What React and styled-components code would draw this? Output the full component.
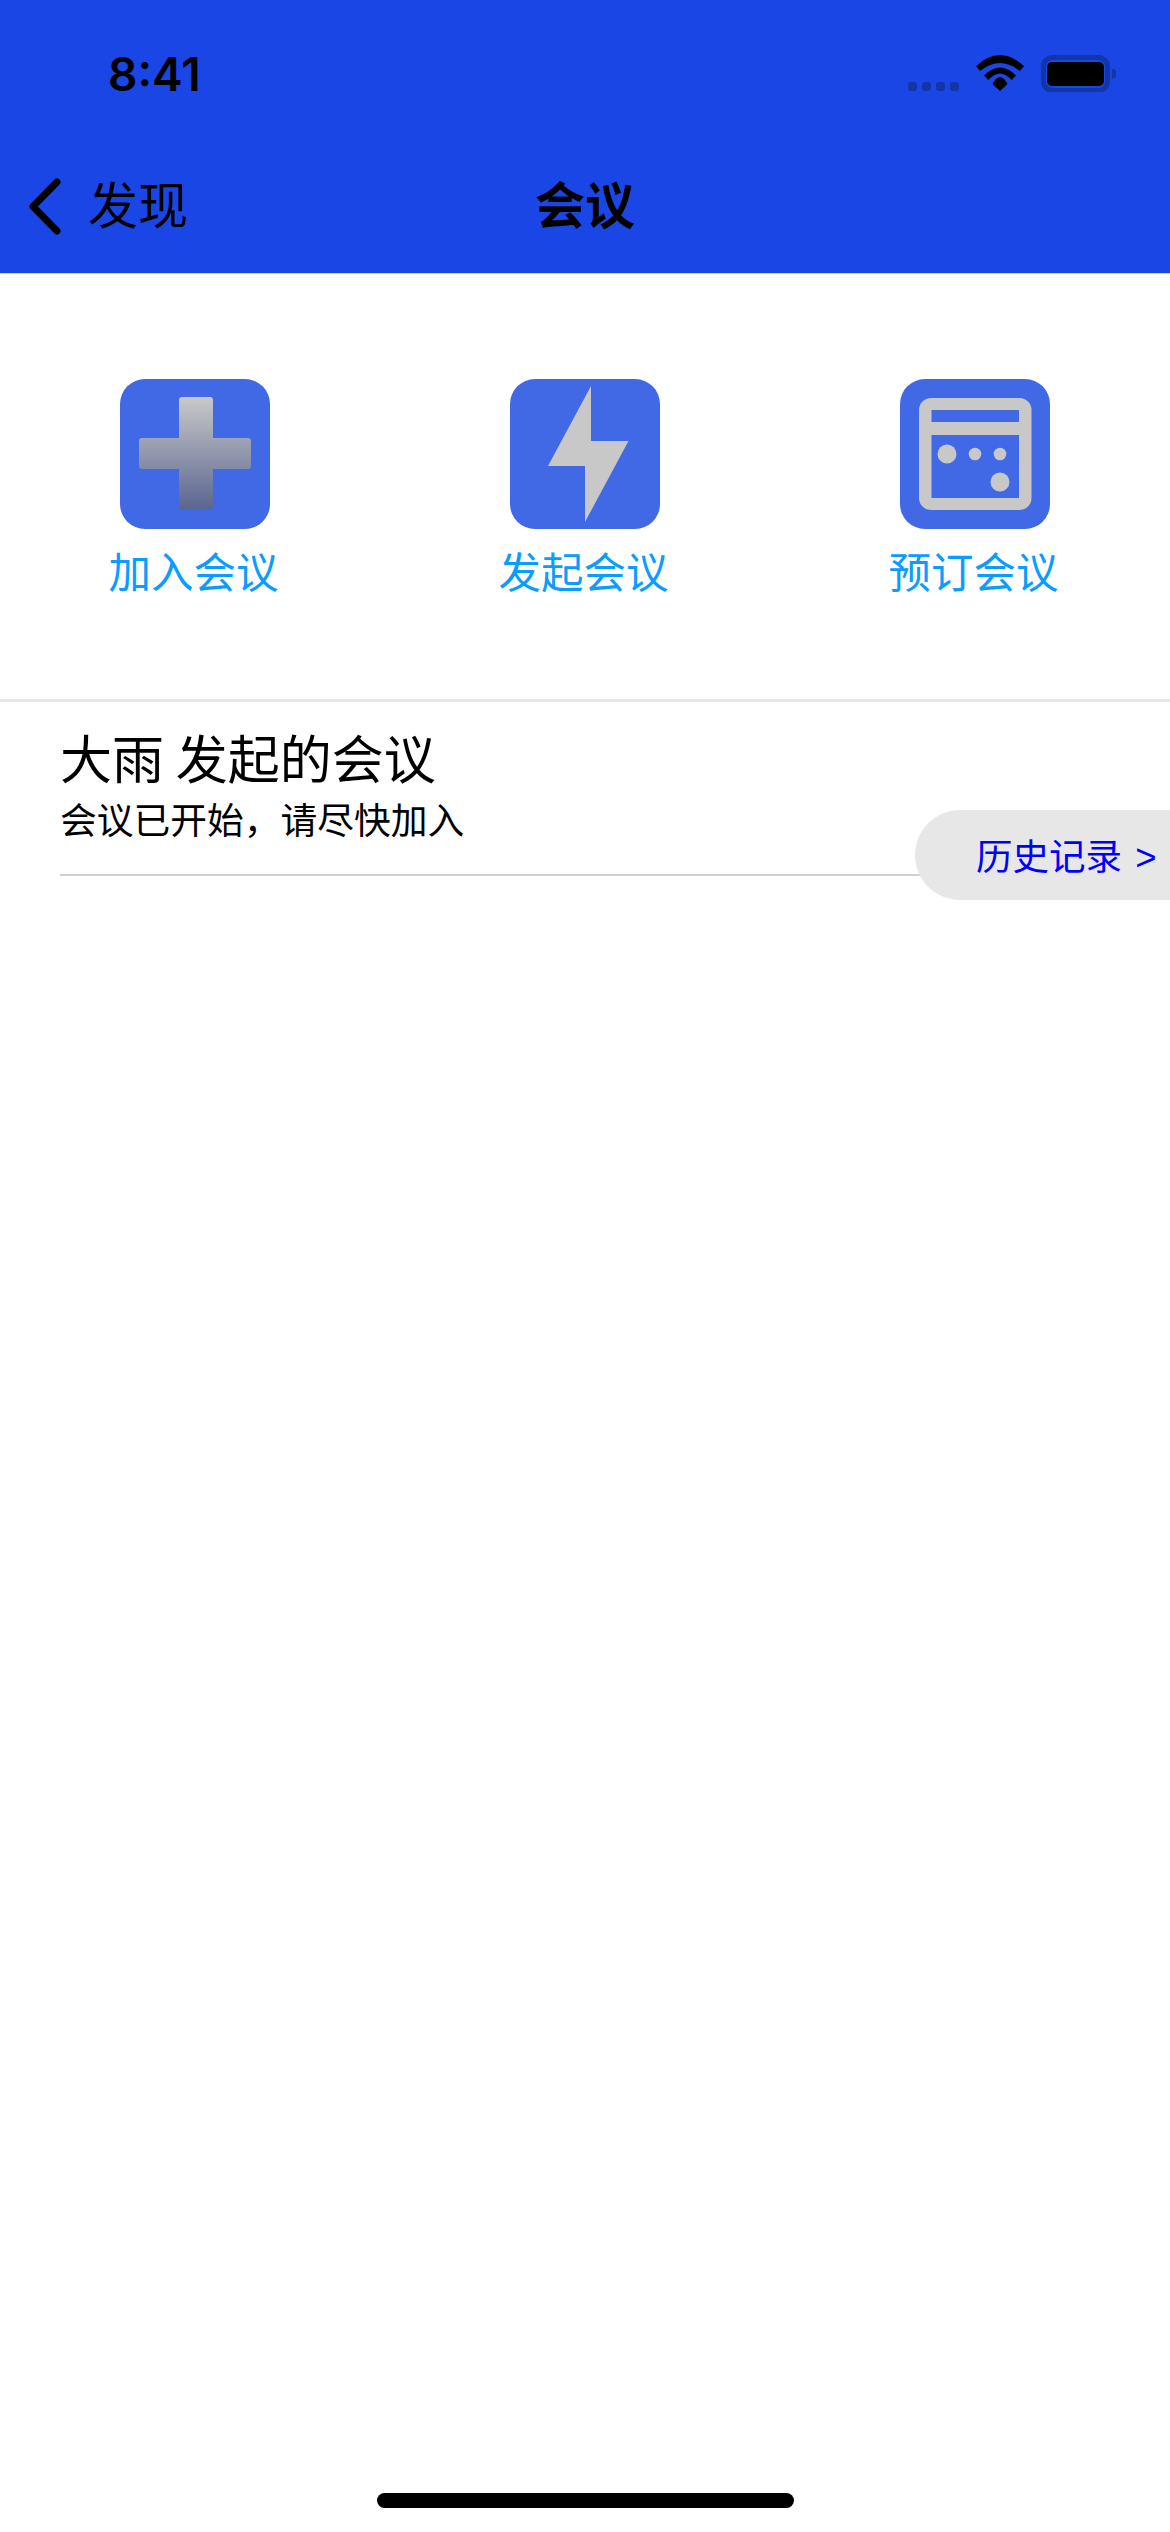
import React from "react"
import styled, { createGlobalStyle } from "styled-components"

const GlobalStyle = createGlobalStyle`
  html, body {
    margin: 0;
    padding: 0;
    background: #fff;
  }
  * {
    box-sizing: border-box;
  }
`

const Page = styled.div`
  width: 1170px;
  height: 2532px;
  display: flex;
  flex-direction: column;
  overflow: hidden;
  background: #fff;
  color: #000;
  font-family: "Noto Sans CJK SC", "Liberation Sans", sans-serif;
`

const Header = styled.header`
  background: #1a46e6;
  border-bottom: 1px solid #c9d2f0;
`

const StatusBar = styled.div`
  height: 147px;
  display: flex;
  align-items: center;
  justify-content: space-between;
  padding: 0 54px 0 108px;
`

const Time = styled.span`
  font-family: Inter, "Liberation Sans", sans-serif;
  font-size: 46px;
  font-weight: 600;
  line-height: 1;
`

const StatusIcons = styled.svg`
  display: block;
  width: 208px;
  height: 37px;
`

const NavBar = styled.nav`
  position: relative;
  height: 126px;
  padding-bottom: 16px;
  display: flex;
  align-items: center;
  justify-content: center;
`

const BackLink = styled.a`
  position: absolute;
  left: 28px;
  top: 26px;
  display: flex;
  align-items: center;
  gap: 27px;
`

const BackLabel = styled.span`
  margin-bottom: 8px;
  font-size: 50px;
  line-height: 58px;
`

const Chevron = styled.svg`
  display: block;
  width: 33px;
  height: 57px;
`

const NavTitle = styled.h1`
  margin: 0;
  font-size: 50px;
  font-weight: 600;
  line-height: 58px;
`

const Actions = styled.section`
  height: 428px;
  padding-top: 105px;
  display: grid;
  grid-template-columns: repeat(3, 1fr);
  align-items: start;
  border-bottom: 3px solid #e8e8e8;
`

const Action = styled.div`
  display: flex;
  flex-direction: column;
  align-items: center;
  gap: 16px;
`

const ActionTile = styled.svg`
  display: block;
  width: 150px;
  height: 150px;
`

const ActionLabel = styled.span`
  margin-right: 3px;
  font-size: 42.5px;
  line-height: 50px;
  color: #0a9cff;
`

const Meetings = styled.section`
  position: relative;
  flex: 1;
`

const MeetingRow = styled.div`
  height: 174px;
  margin-left: 60px;
  padding-top: 24px;
  border-bottom: 2px solid #d0d0d0;
`

const MeetingTitle = styled.div`
  margin-bottom: 8px;
  font-size: 52px;
  line-height: 62px;
`

const MeetingNote = styled.div`
  font-size: 36.75px;
  line-height: 44px;
`

const HistoryButton = styled.a`
  position: absolute;
  right: 0;
  top: 108px;
  width: 255px;
  height: 90px;
  display: flex;
  align-items: center;
  padding: 5px 0 0 61px;
  border-radius: 45px 0 0 45px;
  background: rgba(230, 230, 230, 0.97);
  font-family: "Liberation Sans", "Noto Sans CJK SC", sans-serif;
  font-size: 36.5px;
  line-height: 44px;
  word-spacing: 3px;
  color: #0000ff;
  white-space: nowrap;
`

const HomeIndicator = styled.div`
  width: 417px;
  height: 15px;
  margin: 0 auto 24px;
  border-radius: 8px;
  background: #000;
`

const tileBlue = "#4169e6"
const iconGrey = "#c8c8c8"

const JoinIcon = () => (
  <ActionTile viewBox="0 0 150 150">
    <defs>
      <linearGradient id="cross" x1="0" y1="0" x2="0" y2="1">
        <stop offset="0" stopColor="#c9c9c9" />
        <stop offset="1" stopColor="#5a6690" />
      </linearGradient>
    </defs>
    <rect width="150" height="150" rx="25" fill={tileBlue} />
    <path
      d="M62 18h28a3 3 0 0 1 3 3v38h35a3 3 0 0 1 3 3v25a3 3 0 0 1-3 3H93v37a3 3 0 0 1-3 3H62a3 3 0 0 1-3-3V90H22a3 3 0 0 1-3-3V62a3 3 0 0 1 3-3h37V21a3 3 0 0 1 3-3z"
      fill="url(#cross)"
    />
  </ActionTile>
)

const StartIcon = () => (
  <ActionTile viewBox="0 0 150 150">
    <rect width="150" height="150" rx="25" fill={tileBlue} />
    <path d="M81 7v55h37.500L75 143V87H38z" fill={iconGrey} />
  </ActionTile>
)

const BookIcon = () => (
  <ActionTile viewBox="0 0 150 150">
    <rect width="150" height="150" rx="25" fill={tileBlue} />
    <rect x="19" y="19" width="112.500" height="112" rx="12" fill={iconGrey} />
    <rect x="31.500" y="31" width="87.500" height="12" fill={tileBlue} />
    <rect x="31.500" y="56" width="87.500" height="63" fill={tileBlue} />
    <circle cx="47" cy="75" r="9.500" fill={iconGrey} />
    <circle cx="75" cy="75" r="6.300" fill={iconGrey} />
    <circle cx="100" cy="75" r="6.300" fill={iconGrey} />
    <circle cx="100" cy="103" r="9.500" fill={iconGrey} />
  </ActionTile>
)

const actions = [
  { label: "加入会议", Icon: JoinIcon },
  { label: "发起会议", Icon: StartIcon },
  { label: "预订会议", Icon: BookIcon },
]

export default function App() {
  return (
    <Page>
      <GlobalStyle />
      <Header>
        <StatusBar>
          <Time>8:41</Time>
          <StatusIcons viewBox="0 0 208 37">
            <g fill="#1236a8">
              <rect x="0" y="27" width="9" height="9" rx="3" />
              <rect x="14" y="27" width="9" height="9" rx="3" />
              <rect x="28" y="27" width="9" height="9" rx="3" />
              <rect x="42" y="27" width="9" height="9" rx="3" />
            </g>
            <g transform="translate(68 0)">
              <path d="M0 11.300Q24-11.300 48 11.300L43.700 16Q24 0 4.300 16z" />
              <path d="M8 20.500Q24 4.500 40 20.500L35.700 25Q24 12 12.300 25z" />
              <path d="M16.500 29Q24 15 31.500 29L24 36z" />
            </g>
            <rect x="135.500" y="2.500" width="64" height="33" rx="9" fill="none" stroke="#1236a8" strokeWidth="5" />
            <rect x="139" y="7" width="57" height="24" rx="5" />
            <path d="M204 14a5 5 0 0 1 0 10z" fill="#1236a8" />
          </StatusIcons>
        </StatusBar>
        <NavBar>
          <BackLink>
            <Chevron viewBox="0 0 33 57">
              <path d="M29 4 5 28.500 29 53" fill="none" stroke="#000" strokeWidth="7" strokeLinecap="round" strokeLinejoin="round" />
            </Chevron>
            <BackLabel>发现</BackLabel>
          </BackLink>
          <NavTitle>会议</NavTitle>
        </NavBar>
      </Header>
      <Actions>
        {actions.map(({ label, Icon }) => (
          <Action key={label}>
            <Icon />
            <ActionLabel>{label}</ActionLabel>
          </Action>
        ))}
      </Actions>
      <Meetings>
        <MeetingRow>
          <MeetingTitle>大雨 发起的会议</MeetingTitle>
          <MeetingNote>会议已开始，请尽快加入</MeetingNote>
        </MeetingRow>
        <HistoryButton>历史记录 &gt;</HistoryButton>
      </Meetings>
      <HomeIndicator />
    </Page>
  )
}
